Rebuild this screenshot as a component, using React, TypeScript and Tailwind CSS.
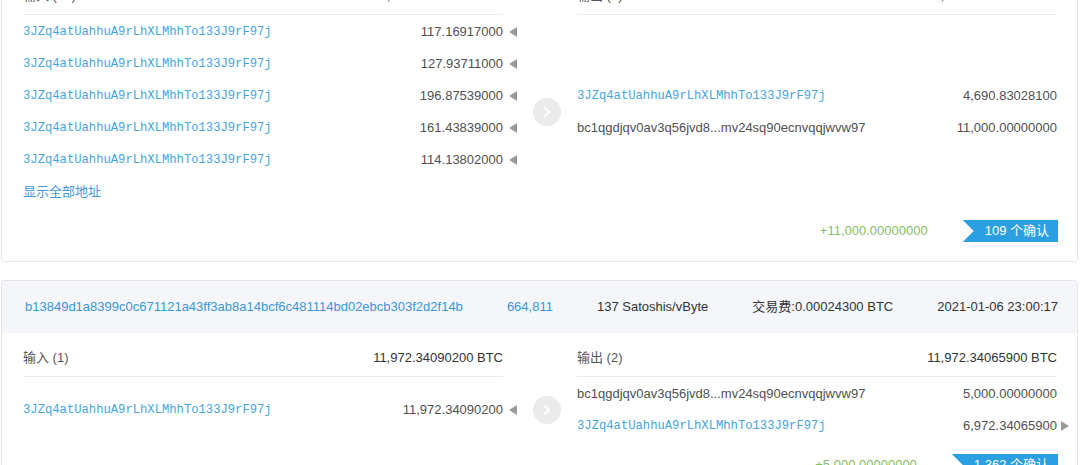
import React from 'react';

type Item = { addr: string; amount: string; mono?: boolean; mark?: 'in' | 'out' };

type Tx = {
  hash: string;
  height: string;
  rate: string;
  fee: string;
  time: string;
  inCount: number;
  inTotal: string;
  inputs: Item[];
  showAll?: boolean;
  outCount: number;
  outTotal: string;
  outputs: Item[];
  change: string;
  confirms: string;
};

const ADDR = '3JZq4atUahhuA9rLhXLMhhTo133J9rF97j';
const BC1 = 'bc1qgdjqv0av3q56jvd8...mv24sq90ecnvqqjwvw97';

const txs: Tx[] = [
  {
    hash: 'a6f21c0e9b84d3c7712f5e08b9d4c16a3e2f7b90d51c8a4e6f03b27d9c1e5a48',
    height: '664,858',
    rate: '52 Satoshis/vByte',
    fee: '0.00026600',
    time: '2021-01-07 06:41:52',
    inCount: 37,
    inTotal: '15,690.83054700 BTC',
    inputs: [
      { addr: ADDR, amount: '117.16917000', mono: true, mark: 'in' },
      { addr: ADDR, amount: '127.93711000', mono: true, mark: 'in' },
      { addr: ADDR, amount: '196.87539000', mono: true, mark: 'in' },
      { addr: ADDR, amount: '161.43839000', mono: true, mark: 'in' },
      { addr: ADDR, amount: '114.13802000', mono: true, mark: 'in' },
    ],
    showAll: true,
    outCount: 2,
    outTotal: '15,690.83028100 BTC',
    outputs: [
      { addr: ADDR, amount: '4,690.83028100', mono: true },
      { addr: BC1, amount: '11,000.00000000' },
    ],
    change: '+11,000.00000000',
    confirms: '109 个确认',
  },
  {
    hash: 'b13849d1a8399c0c671121a43ff3ab8a14bcf6c481114bd02ebcb303f2d2f14b',
    height: '664,811',
    rate: '137 Satoshis/vByte',
    fee: '0.00024300',
    time: '2021-01-06 23:00:17',
    inCount: 1,
    inTotal: '11,972.34090200 BTC',
    inputs: [{ addr: ADDR, amount: '11,972.34090200', mono: true, mark: 'in' }],
    outCount: 2,
    outTotal: '11,972.34065900 BTC',
    outputs: [
      { addr: BC1, amount: '5,000.00000000' },
      { addr: ADDR, amount: '6,972.34065900', mono: true, mark: 'out' },
    ],
    change: '+5,000.00000000',
    confirms: '1,362 个确认',
  },
];

const Tri = ({ dir }: { dir: 'in' | 'out' }) => (
  <svg
    width="8"
    height="10"
    viewBox="0 0 8 10"
    className={`absolute left-full top-1/2 -translate-y-1/2 ${dir === 'in' ? 'ml-[6px]' : 'ml-[4px]'}`}
  >
    {dir === 'in' ? <path d="M8 0 L8 10 L0 5 Z" fill="#9a9a9a" /> : <path d="M0 0 L0 10 L8 5 Z" fill="#9a9a9a" />}
  </svg>
);

const Row = ({ item }: { item: Item }) => (
  <div className="flex h-8 items-center justify-between">
    {item.mono ? (
      <span className="font-['Liberation_Mono',monospace] text-[12.2px] text-[#45a5dc]">{item.addr}</span>
    ) : (
      <span className="text-[#505050]">{item.addr}</span>
    )}
    <span className="relative text-[#505050]">
      {item.amount}
      {item.mark && <Tri dir={item.mark} />}
    </span>
  </div>
);

const ColHead = ({ label, total }: { label: string; total: string }) => (
  <div className="flex w-[480px] items-center justify-between border-b border-[#ececec] pb-[8px] pt-[15px] leading-5">
    <span className="text-[#555]">{label}</span>
    <span className="text-[#333]">{total}</span>
  </div>
);

const TxCard = ({ tx, className = '' }: { tx: Tx; className?: string }) => (
  <div className={`ml-px w-[1077px] rounded-[3px] border border-[#e6e6e6] bg-white ${className}`}>
    {/* hash line */}
    <div className="flex h-[52px] items-center justify-between bg-[#f4f6f9] pl-[23px] pr-[19px] text-[#333]">
      <span className="text-[#3b97d5]">{tx.hash}</span>
      <span className="text-[#3b97d5]">{tx.height}</span>
      <span>{tx.rate}</span>
      <span>交易费:{tx.fee} BTC</span>
      <span>{tx.time}</span>
    </div>

    <div className="pl-[21px] pr-[19px]">
      <div className="flex">
        <ColHead label={`输入 (${tx.inCount})`} total={tx.inTotal} />
        <div className="w-[74px]" />
        <ColHead label={`输出 (${tx.outCount})`} total={tx.outTotal} />
      </div>

      <div className="flex items-center pt-px">
        <div className="w-[480px]">
          {tx.inputs.map((it, i) => (
            <Row key={i} item={it} />
          ))}
          {tx.showAll && (
            <div className="flex h-8 items-center text-[#3d9ad8]">显示全部地址</div>
          )}
        </div>
        <div className="flex w-[74px] pl-[30px]">
          <div className="flex h-7 w-7 items-center justify-center rounded-full bg-[#ebebeb]">
            <svg width="10" height="12" viewBox="0 0 10 12" fill="none">
              <path d="M3 2 L7 6 L3 10" stroke="#fff" strokeWidth="2.2" strokeLinecap="round" strokeLinejoin="round" />
            </svg>
          </div>
        </div>
        <div className="w-[480px]">
          {tx.outputs.map((it, i) => (
            <Row key={i} item={it} />
          ))}
        </div>
      </div>

      <div className="flex items-center justify-end gap-[35px] pb-[19px] pt-3">
        <span className="text-[#86bf62]">{tx.change}</span>
        <span className="flex h-[22px] items-center bg-[#2a9fe2] pl-[22px] pr-[9px] text-white [clip-path:polygon(0_0,100%_0,100%_100%,0_100%,11px_50%)]">
          {tx.confirms}
        </span>
      </div>
    </div>
  </div>
);

export default function App() {
  return (
    <div className="h-[465px] overflow-hidden bg-white font-['Liberation_Sans','Noto_Sans_CJK_SC',sans-serif] text-[13px]">
      <div className="flex flex-col gap-[18px]">
        <TxCard tx={txs[0]} className="-mt-[82px]" />
        <TxCard tx={txs[1]} />
      </div>
    </div>
  );
}
